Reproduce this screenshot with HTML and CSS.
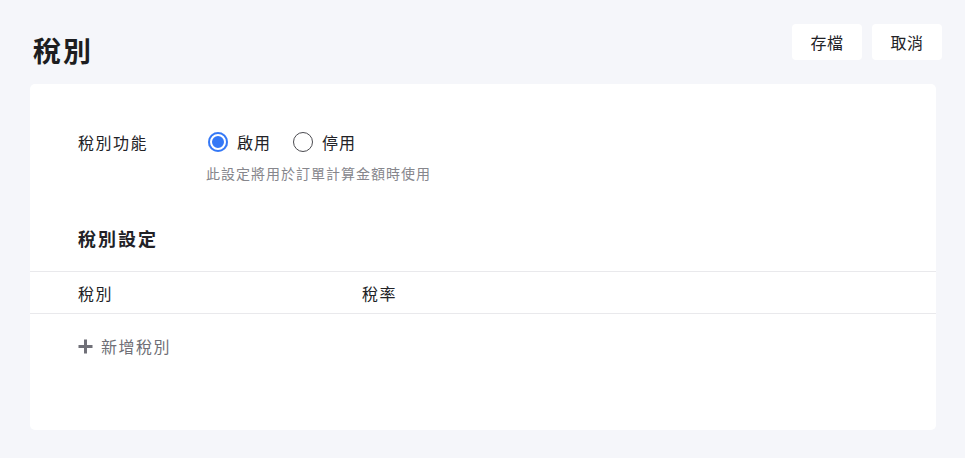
FILE: index.html
```html
<!DOCTYPE html>
<html lang="zh-Hant">
<head>
<meta charset="utf-8">
<title>稅別</title>
<link rel="stylesheet" href="styles.css">
</head>
<body>
<header class="top">
  <h1 class="title">稅別</h1>
  <div class="actions">
    <button class="btn">存檔</button>
    <button class="btn">取消</button>
  </div>
</header>
<main class="card">
  <div class="field">
    <div class="field-label">稅別功能</div>
    <div class="field-body">
      <div class="radios">
        <label class="radio"><span class="dot checked"></span><span>啟用</span></label>
        <label class="radio"><span class="dot"></span><span>停用</span></label>
      </div>
      <p class="hint">此設定將用於訂單計算金額時使用</p>
    </div>
  </div>
  <h2 class="section">稅別設定</h2>
  <div class="table-head">
    <div class="col-name">稅別</div>
    <div class="col-rate">稅率</div>
  </div>
  <div class="add">
    <svg class="plus" width="15" height="15" viewBox="0 0 15 15"><path d="M7.5 0.5v14M0.5 7.5h14" stroke="currentColor" stroke-width="3" stroke-linecap="butt"/></svg>
    <span>新增稅別</span>
  </div>
</main>
</body>
</html>
```
FILE: styles.css
```css
* { box-sizing: border-box; }
body {
  margin: 0;
  background: #f5f6fa;
  font-family: "Noto Sans CJK TC", "Noto Sans", sans-serif;
  color: #222226;
}
.top {
  display: flex;
  justify-content: space-between;
  align-items: flex-start;
  padding: 24px 23px 0 33px;
}
.title {
  margin: 0;
  margin-top: 10px;
  font-size: 28px;
  line-height: 32px;
  font-weight: 700;
  letter-spacing: 2px;
  color: #1d1d20;
}
.actions {
  display: flex;
  gap: 10px;
}
.btn {
  width: 70px;
  height: 36px;
  border: none;
  border-radius: 4px;
  background: #fff;
  font-family: inherit;
  font-size: 16px;
  letter-spacing: 0.5px;
  color: #222226;
  padding: 0;
}
.card {
  margin: 18px 29px 0 30px;
  height: 346px;
  background: #fff;
  border-radius: 5px;
  padding-top: 46px;
}
.field {
  display: flex;
  padding-left: 48px;
}
.field-label {
  width: 128px;
  font-size: 16px;
  line-height: 24px;
  letter-spacing: 1.5px;
}
.radios {
  display: flex;
  gap: 22px;
  padding-left: 2px;
}
.radio {
  display: flex;
  align-items: center;
  gap: 9px;
  font-size: 16px;
  line-height: 24px;
  letter-spacing: 1px;
}
.dot {
  width: 20px;
  height: 20px;
  border-radius: 50%;
  border: 1.5px solid #4b4b50;
  background: #fff;
}
.dot.checked {
  border: none;
  background: #3478f6;
  box-shadow: inset 0 0 0 2px #3478f6, inset 0 0 0 4px #fff;
}
.hint {
  margin: 9px 0 0;
  font-size: 14px;
  line-height: 20px;
  letter-spacing: 1px;
  color: #86868c;
}
.section {
  margin: 42px 0 0;
  padding-left: 48px;
  font-size: 18px;
  line-height: 26px;
  font-weight: 700;
  letter-spacing: 2px;
}
.table-head {
  margin-top: 20px;
  display: flex;
  align-items: center;
  height: 43px;
  border-top: 1.5px solid #e9e9ec;
  border-bottom: 1.5px solid #e9e9ec;
  padding-left: 48px;
  font-size: 16px;
  letter-spacing: 1.5px;
}
.col-name { width: 284px; }
.add {
  margin-top: 20px;
  padding-left: 48px;
  display: flex;
  align-items: center;
  gap: 8px;
  font-size: 16px;
  line-height: 24px;
  letter-spacing: 1.5px;
  color: #6f6f76;
}
.plus { color: #707078; }
```
